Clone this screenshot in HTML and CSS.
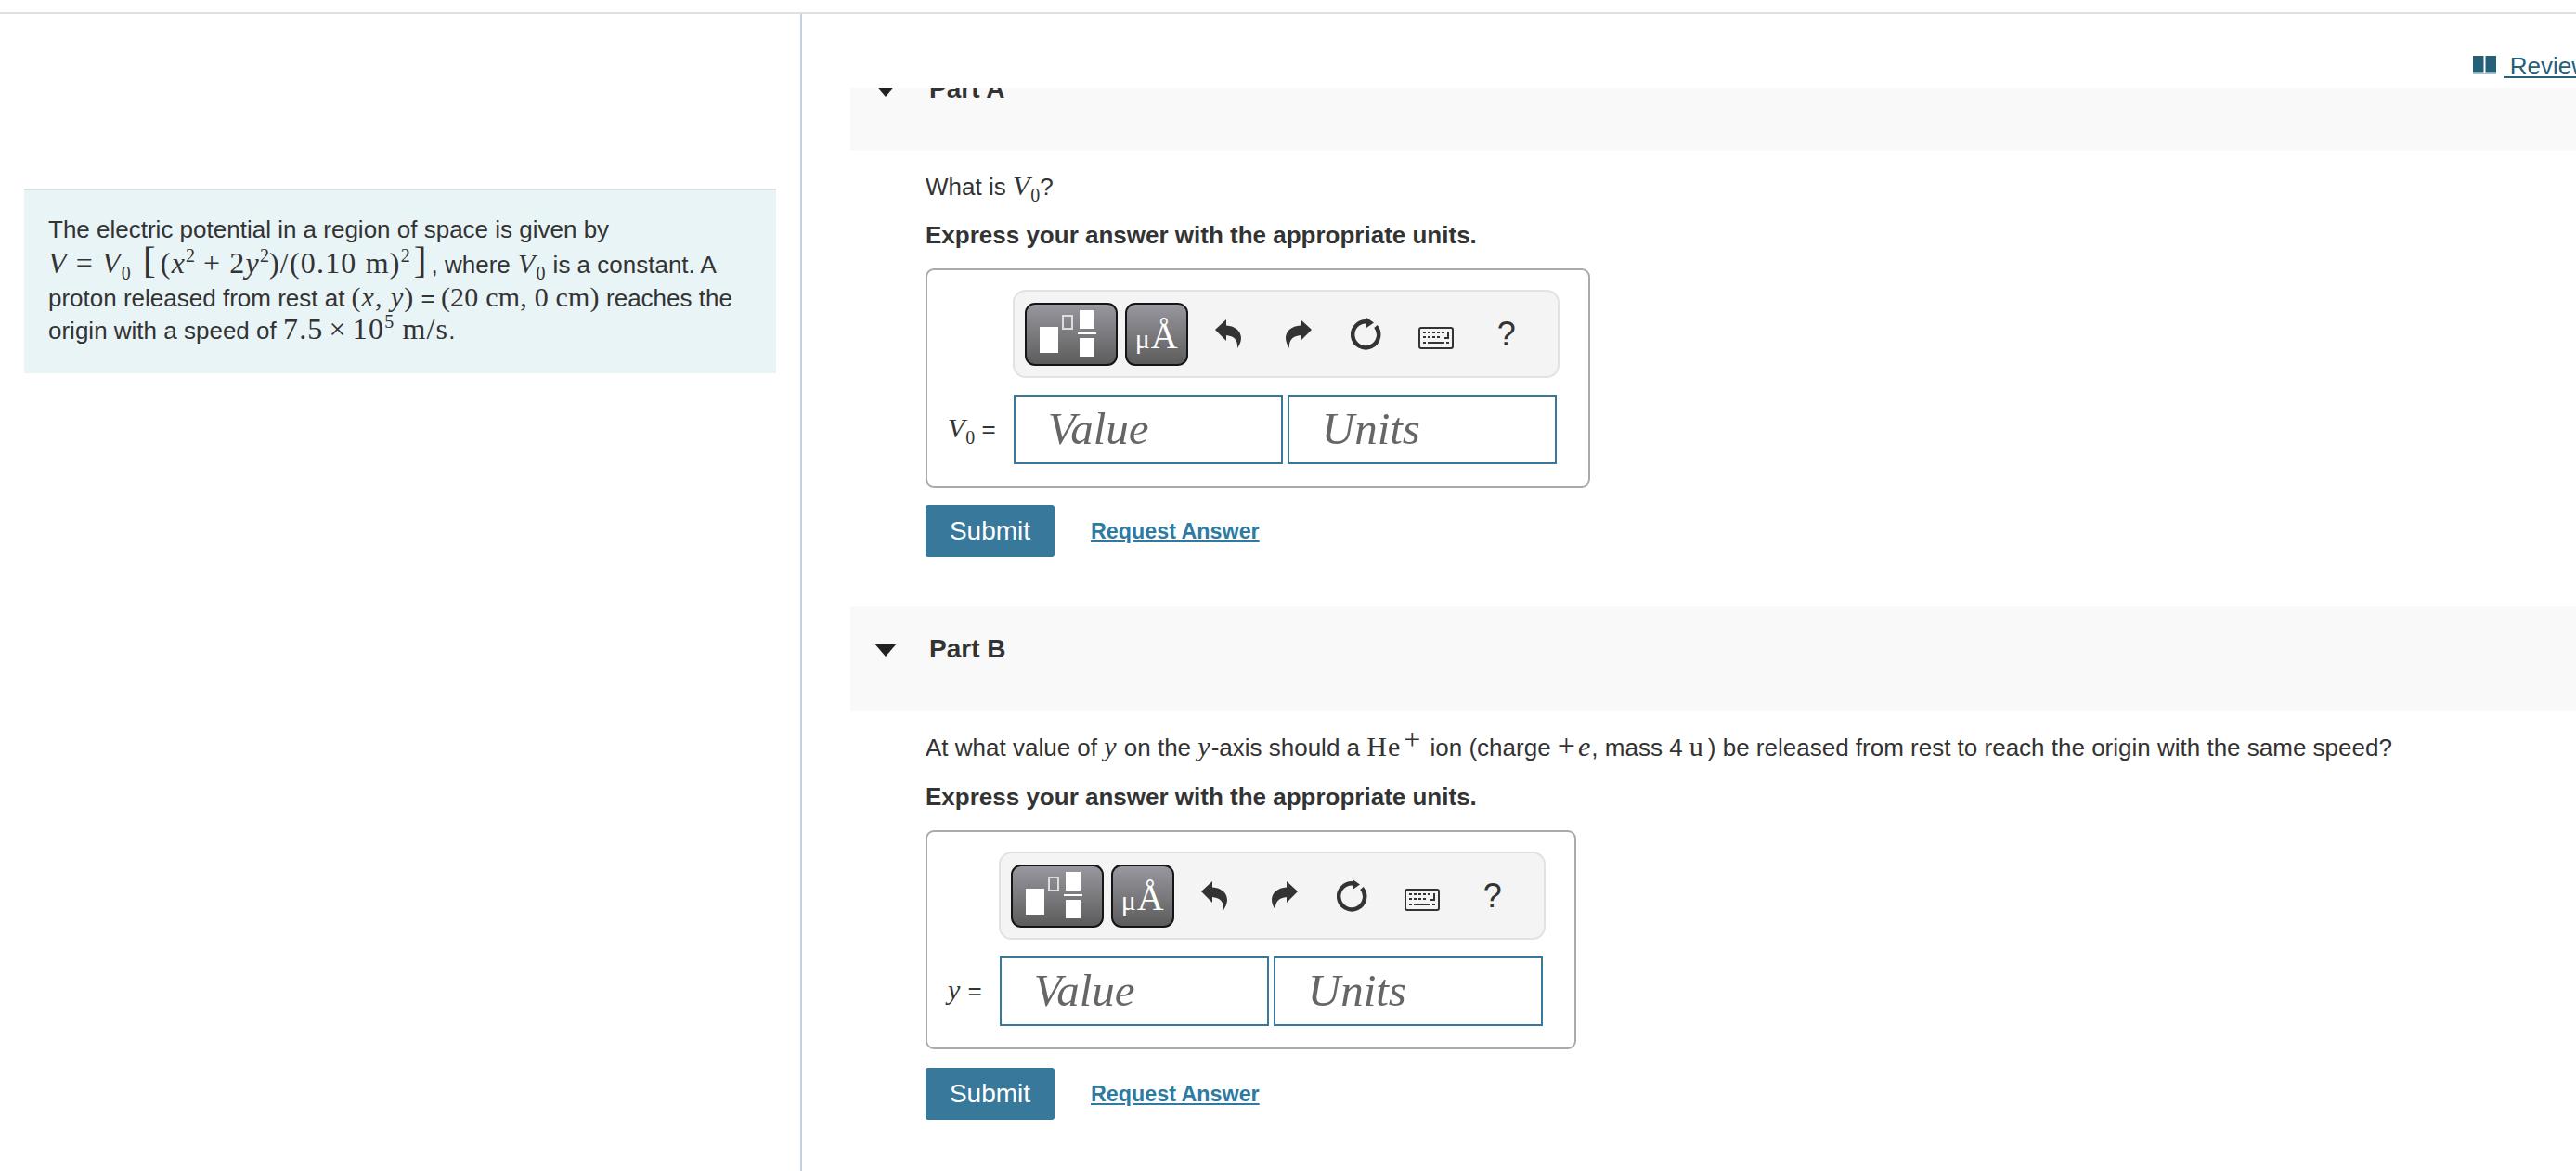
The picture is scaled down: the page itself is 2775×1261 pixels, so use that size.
FILE: index.html
```html
<!DOCTYPE html>
<html lang="en">
<head>
<meta charset="utf-8">
<title>Electric potential</title>
<link rel="stylesheet" href="styles.css">
</head>
<body>
<div class="topbar"></div>
<div class="layout">
  <aside class="left">
    <div class="intro">
      <div class="line line-1">The electric potential in a region of space is given by</div>
      <div class="line line-2"><span class="m wide"><i>V</i><span class="op op-wide">=</span><i>V</i><sub>0</sub> <span class="big">[</span>(<i>x</i><sup>2</sup><span class="op op-wide">+</span>2<i>y</i><sup>2</sup>)/(0.10 m)<sup>2</sup><span class="big">]</span></span>, where <span class="m gap-s"><i>V</i><sub>0</sub></span> is a constant. A</div>
      <div class="line line-3">proton released from rest at <span class="m">(<i>x</i>, <i>y</i>)</span> = <span class="m tight">(20 cm, 0 cm)</span> reaches the</div>
      <div class="line">origin with a speed of <span class="m wide">7.5<span class="op">×</span>10<sup>5</sup> m/s</span>.</div>
    </div>
  </aside>
  <main class="right">
    <div class="review-row">
      <a class="review" href="#">
        <svg class="book" viewBox="0 0 25 20" width="25" height="20"><path d="M0 0h11.500v18.500h-11.500zM13.500 0h11.500v18.500h-11.500z" fill="#265f78"/><path d="M0 19h25v1h-25z" fill="#a9bfca"/></svg>
        <span class="review-text">&nbsp;Review</span>
      </a>
    </div>
    <div class="scroll">
      <div class="parts">
        <section class="part">
          <header class="band"><span class="tri"></span><h2 class="part-title">Part A</h2></header>
          <div class="part-body">
            <p class="question">What is <span class="m"><i>V</i><sub>0</sub></span>?</p>
            <p class="express">Express your answer with the appropriate units.</p>
            <div class="answer">
              <div class="toolbar">
                <button class="tool tool-wide"><svg viewBox="0 0 96 64" width="96" height="64"><g fill="#fff"><rect x="14" y="24" width="20" height="28"/><rect x="57" y="6" width="16" height="20"/><rect x="55" y="30" width="20" height="2"/><rect x="57" y="36" width="16" height="20"/></g><rect x="39" y="12" width="10" height="14" fill="none" stroke="#ddd" stroke-width="2"/></svg></button>
                <button class="tool tool-units">μ<span class="ang">Å</span></button>
                <svg class="ico ico-undo" viewBox="0 0 28 31" width="28" height="31"><path d="M0 11 12 0v6.500C22 7 28 13 28 20c0 4-2 8-4 11 .6-6-1-13-12-14v6z" fill="#333"/></svg>
                <svg class="ico ico-redo" viewBox="0 0 28 31" width="28" height="31"><path d="M28 11 16 0v6.500C6 7 0 13 0 20c0 4 2 8 4 11-.6-6 1-13 12-14v6z" fill="#333"/></svg>
                <svg class="ico ico-reload" viewBox="0 0 34 36" width="34" height="36"><path d="M18 4.500A14 14 0 1 0 27 9.500" fill="none" stroke="#333" stroke-width="4.500"/><path d="M17 0 25 5.500 17 11z" fill="#333"/></svg>
                <svg class="ico ico-keys" viewBox="0 0 38 24" width="38" height="24"><rect x="1" y="1" width="36" height="22" rx="2" fill="#f4f4f4" stroke="#333" stroke-width="2"/><path d="M5 5h3v2H5zM10 5h3v2h-3zM15 5h3v2h-3zM20 5h3v2h-3zM25 5h3v2h-3zM30 5h3v8h-5v-2h3V5zM5 10h3v2H5zM10 10h3v2h-3zM15 10h3v2h-3zM20 10h3v2h-3zM5 16h3v2H5zM10 16h18v2H10zM30 16h3v2h-3z" fill="#333"/></svg>
                <span class="help">?</span>
              </div>
              <div class="fields">
                <span class="label"><span class="m"><i>V</i><sub>0</sub></span> =</span>
                <span class="field">Value</span>
                <span class="field field-units">Units</span>
              </div>
            </div>
            <div class="actions"><button class="submit">Submit</button><a class="request" href="#">Request Answer</a></div>
          </div>
        </section>
        <section class="part part-b">
          <header class="band"><span class="tri"></span><h2 class="part-title">Part B</h2></header>
          <div class="part-body">
            <p class="question">At what value of <span class="m"><i>y</i></span> on the <span class="m"><i>y</i></span>-axis should a <span class="m">He<sup class="plus">+</sup></span> ion (charge <span class="m"><span class="plus-op">+</span><i>e</i></span>, mass 4 <span class="m unit">u</span>) be released from rest to reach the origin with the same speed?</p>
            <p class="express">Express your answer with the appropriate units.</p>
            <div class="answer">
              <div class="toolbar">
                <button class="tool tool-wide"><svg viewBox="0 0 96 64" width="96" height="64"><g fill="#fff"><rect x="14" y="24" width="20" height="28"/><rect x="57" y="6" width="16" height="20"/><rect x="55" y="30" width="20" height="2"/><rect x="57" y="36" width="16" height="20"/></g><rect x="39" y="12" width="10" height="14" fill="none" stroke="#ddd" stroke-width="2"/></svg></button>
                <button class="tool tool-units">μ<span class="ang">Å</span></button>
                <svg class="ico ico-undo" viewBox="0 0 28 31" width="28" height="31"><path d="M0 11 12 0v6.500C22 7 28 13 28 20c0 4-2 8-4 11 .6-6-1-13-12-14v6z" fill="#333"/></svg>
                <svg class="ico ico-redo" viewBox="0 0 28 31" width="28" height="31"><path d="M28 11 16 0v6.500C6 7 0 13 0 20c0 4 2 8 4 11-.6-6 1-13 12-14v6z" fill="#333"/></svg>
                <svg class="ico ico-reload" viewBox="0 0 34 36" width="34" height="36"><path d="M18 4.500A14 14 0 1 0 27 9.500" fill="none" stroke="#333" stroke-width="4.500"/><path d="M17 0 25 5.500 17 11z" fill="#333"/></svg>
                <svg class="ico ico-keys" viewBox="0 0 38 24" width="38" height="24"><rect x="1" y="1" width="36" height="22" rx="2" fill="#f4f4f4" stroke="#333" stroke-width="2"/><path d="M5 5h3v2H5zM10 5h3v2h-3zM15 5h3v2h-3zM20 5h3v2h-3zM25 5h3v2h-3zM30 5h3v8h-5v-2h3V5zM5 10h3v2H5zM10 10h3v2h-3zM15 10h3v2h-3zM20 10h3v2h-3zM5 16h3v2H5zM10 16h18v2H10zM30 16h3v2h-3z" fill="#333"/></svg>
                <span class="help">?</span>
              </div>
              <div class="fields">
                <span class="label"><span class="m"><i>y</i></span> =</span>
                <span class="field">Value</span>
                <span class="field field-units">Units</span>
              </div>
            </div>
            <div class="actions"><button class="submit">Submit</button><a class="request" href="#">Request Answer</a></div>
          </div>
        </section>
      </div>
    </div>
  </main>
</div>
</body>
</html>
```
FILE: styles.css
```css
* { box-sizing: border-box; }
html, body { margin: 0; height: 100%; overflow: hidden; background: #fff; }
body { font-family: "Liberation Sans", Arial, sans-serif; font-size: 26px; color: #333; }

.topbar { height: 15px; border-bottom: 2px solid #e0e0e0; }
.layout { display: flex; height: 1246px; }

.left { flex: 0 0 864px; border-right: 2px solid #c6d0e0; padding: 188px 0 0 26px; }
.intro { width: 810px; height: 199px; background: #e9f4f7; border-top: 2px solid #dde0e4; padding: 24px 0 0 26px; line-height: 36px; white-space: nowrap; }
.line-1 { height: 38px; }
.line-2 { height: 36px; }
.line-3 { height: 35px; }

.m { font-family: "Liberation Serif", "Times New Roman", serif; font-size: 30px; letter-spacing: 1px; line-height: 0; }
.m sub, .m sup { font-size: 20px; line-height: 0; letter-spacing: 0; }
.m sup.plus { font-size: 32px; vertical-align: 7px; margin: 0 3px 0 3px; }
.wide { font-size: 32px; letter-spacing: 1.200px; }
.tight { letter-spacing: .2px; margin-left: -1px; }
.gap-s { margin: 0 1px 0 1px; }
.unit { margin-right: 4px; }
.op { margin: 0 6px; }
.op-wide { margin: 0 9px; }
.plus-op { margin-right: 2px; font-size: 34px; }
.big { font-size: 41px; line-height: 0; margin: 0 4px; }

.right { flex: 1; min-width: 0; overflow: hidden; padding-left: 52px; }
.review-row { height: 80px; display: flex; justify-content: flex-end; margin-right: -14px; }
.review { display: flex; align-items: flex-start; gap: 8px; padding-top: 45px; color: #265f78; text-decoration: none; }
.review-text { font-size: 26px; line-height: 22px; padding-bottom: 1px; border-bottom: 2px solid #265f78; height: 24px; }

.scroll { height: 1166px; overflow: hidden; }
.parts { margin-top: -45px; }
.part-b { margin-top: 53px; }

.band { height: 113px; background: #f9f9f9; display: flex; align-items: flex-start; padding: 31px 0 0 26px; }
.tri { width: 24px; height: 14px; margin: 9px 35px 0 0; background: #222; clip-path: polygon(0 0, 100% 0, 50% 100%); }
.part-title { margin: 0; font-size: 28px; line-height: 30px; font-weight: 700; color: #333; }

.part-body { padding: 0 0 0 81px; }
.question { margin: 0; padding-top: 21px; height: 59px; line-height: 34px; white-space: nowrap; }
.part-b .question { height: 61px; padding-top: 22px; }
.express { margin: 0; height: 38px; padding-top: 16px; line-height: 30px; font-weight: 700; white-space: nowrap; }

.answer { display: inline-block; margin-top: 29px; border: 2px solid #aaa; border-radius: 9px; padding: 21px 34px 23px 22px; vertical-align: top; }
.toolbar { display: flex; align-items: center; height: 95px; width: 589px; margin-left: auto; margin-right: -3px; background: #f4f4f4; border: 2px solid #e2e2e2; border-radius: 14px; padding-left: 11px; }
.tool { height: 68px; padding: 0; border: 2px solid #151515; border-radius: 11px; background: linear-gradient(#99979f, #5c5c5c); color: #fff; display: flex; align-items: baseline; justify-content: center; }
.tool-wide { width: 100px; align-items: center; }
.tool-wide svg { display: block; }
.tool-units { width: 68px; margin-left: 8px; font-family: "Liberation Serif", "Times New Roman", serif; font-size: 30px; line-height: 38px; padding-top: 15px; }
.ang { font-size: 40px; margin-left: 1px; }
.ico { flex: none; }
.ico-undo { margin-left: 29px; }
.ico-redo { margin-left: 48px; }
.ico-reload { margin-left: 42px; }
.ico-keys { margin-left: 39px; margin-top: 8px; }
.help { margin-left: 47px; font-size: 36px; line-height: 36px; color: #333; }

.fields { display: flex; align-items: center; margin-top: 18px; }
.label { margin-right: 19px; white-space: nowrap; font-size: 26px; }
.field { width: 290px; height: 75px; border: 2px solid #37789b; background: #fff; padding-left: 35px; font-family: "Liberation Serif", "Times New Roman", serif; font-style: italic; font-size: 49px; line-height: 69px; color: #666; }
.field-units { margin-left: 5px; }

.actions { display: flex; align-items: center; margin-top: 19px; }
.part-b .actions { margin-top: 20px; }
.submit { width: 139px; height: 56px; padding: 0; border: 0; border-radius: 3px; background: #37789b; color: #fff; font-family: inherit; font-size: 28px; }
.request { margin-left: 39px; color: #2e7aa0; font-size: 23.300px; font-weight: 700; text-decoration: underline; }
```
